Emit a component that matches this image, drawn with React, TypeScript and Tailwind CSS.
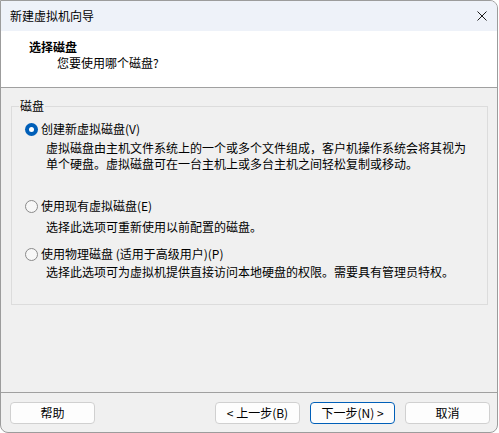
import React, { useState } from "react";

const font = { fontFamily: '"Noto Sans CJK SC", "Noto Sans", sans-serif' };

function Radio({ checked, onClick }: { checked: boolean; onClick: () => void }) {
  return (
    <span
      onClick={onClick}
      className={`flex h-[13px] w-[13px] shrink-0 items-center justify-center rounded-full ${
        checked ? "bg-[#005fb8]" : "border border-[#8a8a8a] bg-[#f7f7f7]"
      }`}
    >
      {checked && <span className="h-[5px] w-[5px] rounded-full bg-white" />}
    </span>
  );
}

function Button({ label, primary }: { label: string; primary?: boolean }) {
  return (
    <button
      className={`h-[22px] w-[85px] rounded-[4px] border bg-[#fdfdfd] text-[12px] leading-[16px] text-black ${
        primary ? "border-[#005fb8]" : "border-[#d0d0d0]"
      }`}
    >
      {label}
    </button>
  );
}

export default function App() {
  const [choice, setChoice] = useState("new");

  return (
    <div
      style={font}
      className="flex h-[433px] w-[498px] flex-col overflow-hidden rounded-tr-lg rounded-b-lg border border-[#9c9c9c] bg-[#f0f0f0] text-[12px] leading-[16px] text-black"
    >
      {/* title bar */}
      <div className="flex h-[30px] shrink-0 items-center justify-between bg-[#eef2f9] pl-[9px] pr-[9px]">
        <span>新建虚拟机向导</span>
        <svg width="10" height="10" viewBox="0 0 10 10" className="mr-[1px]">
          <path d="M0.5 0.5 L9.5 9.5 M9.5 0.5 L0.5 9.5" stroke="#1a1a1a" strokeWidth="1" />
        </svg>
      </div>

      {/* header */}
      <div className="h-[57px] shrink-0 border-b border-[#a0a0a0] bg-white pt-[8px]">
        <div className="pl-[28px] font-bold">选择磁盘</div>
        <div className="pl-[56px]">您要使用哪个磁盘?</div>
      </div>

      {/* body */}
      <div className="h-[304px] shrink-0 pt-[18px]">
        <div className="relative ml-[10px] h-[199px] w-[477px] border border-[#dcdcdc] pl-[13px] pt-[14px]">
          <span className="absolute -top-[9px] left-[7px] bg-[#f0f0f0] px-[1px]">磁盘</span>

          <div className="flex items-center gap-[3px]">
            <Radio checked={choice === "new"} onClick={() => setChoice("new")} />
            <span>创建新虚拟磁盘(V)</span>
          </div>
          <div className="mt-[3px] pl-[21px]">
            <div>虚拟磁盘由主机文件系统上的一个或多个文件组成，客户机操作系统会将其视为</div>
            <div>单个硬盘。虚拟磁盘可在一台主机上或多台主机之间轻松复制或移动。</div>
          </div>

          <div className="mt-[26px] flex items-center gap-[3px]">
            <Radio checked={choice === "existing"} onClick={() => setChoice("existing")} />
            <span>使用现有虚拟磁盘(E)</span>
          </div>
          <div className="mt-[5px] pl-[21px]">选择此选项可重新使用以前配置的磁盘。</div>

          <div className="mt-[11px] flex items-center gap-[3px]">
            <Radio checked={choice === "physical"} onClick={() => setChoice("physical")} />
            <span>使用物理磁盘 (适用于高级用户)(P)</span>
          </div>
          <div className="mt-[2px] pl-[21px]">选择此选项可为虚拟机提供直接访问本地硬盘的权限。需要具有管理员特权。</div>
        </div>
      </div>

      {/* footer */}
      <div className="flex flex-1 items-start justify-between border-t border-[#a0a0a0] pl-[9px] pr-[7px] pt-[9px]">
        <Button label="帮助" />
        <div className="flex gap-[10px]">
          <Button label="< 上一步(B)" />
          <Button label="下一步(N) >" primary />
          <Button label="取消" />
        </div>
      </div>
    </div>
  );
}
